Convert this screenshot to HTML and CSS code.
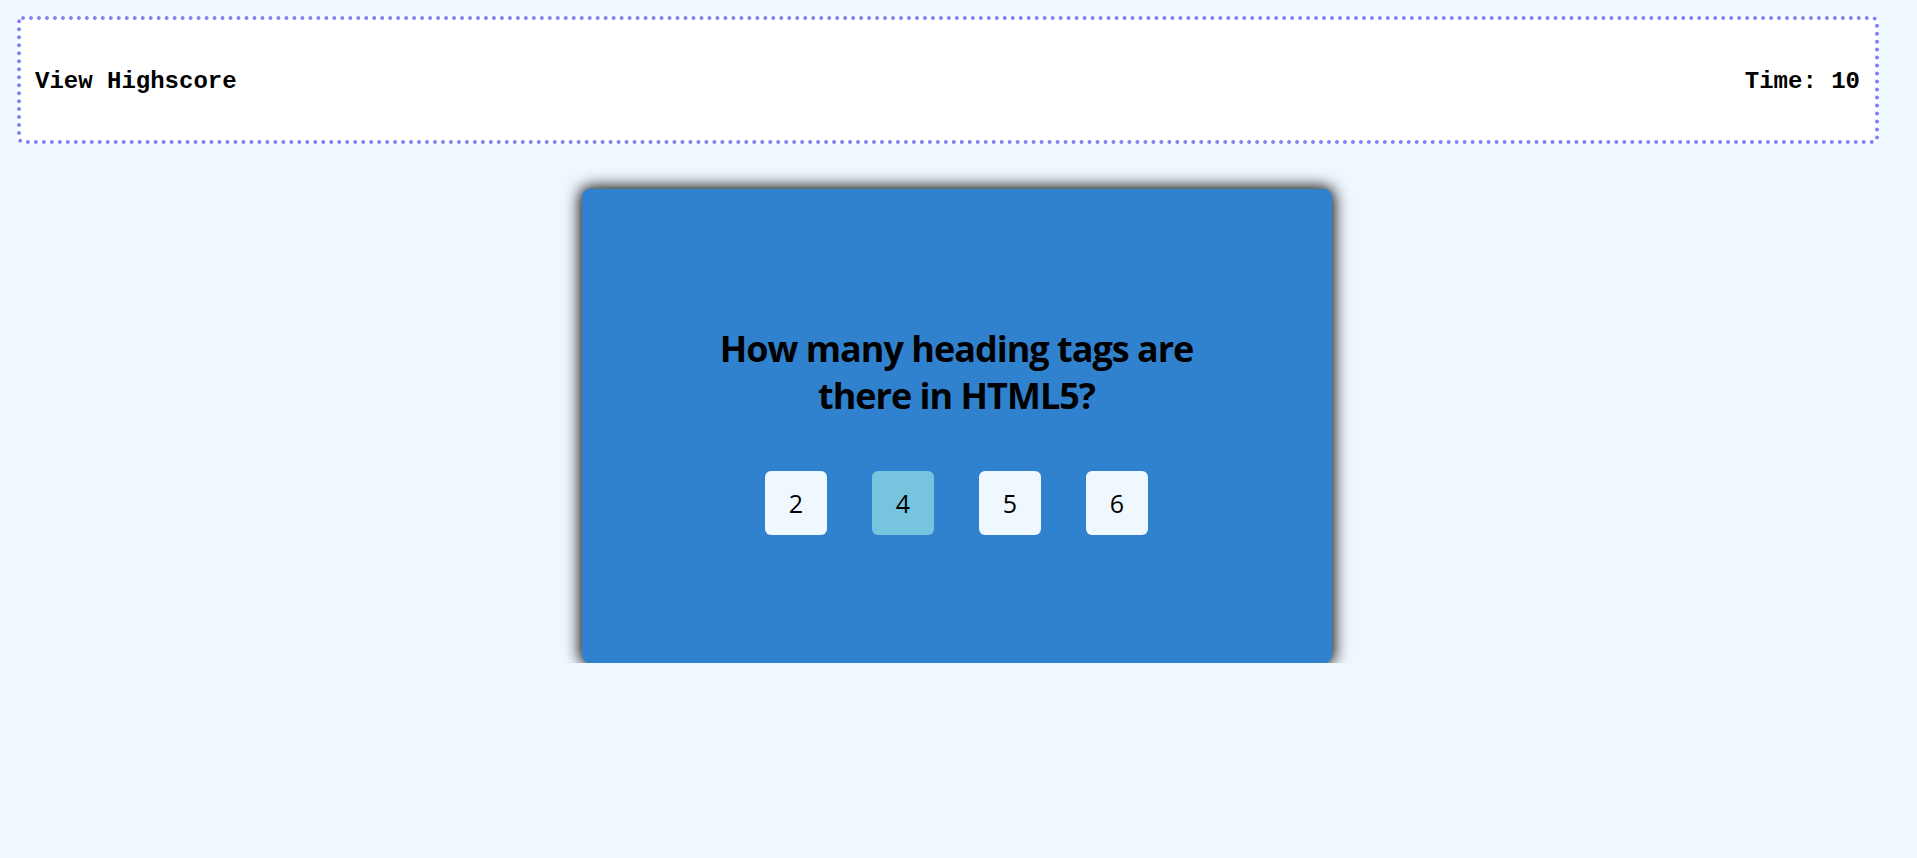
FILE: index.html
```html
<!DOCTYPE html>
<html lang="en">
<head>
<meta charset="utf-8">
<title>Quiz</title>
<link rel="stylesheet" href="styles.css">
</head>
<body>
<header class="topbar">
  <span class="topbar-link">View Highscore</span>
  <span class="topbar-time">Time: 10</span>
</header>
<div class="stage">
  <main class="quiz-card">
    <h1 class="question">How many heading tags are there in HTML5?</h1>
    <div class="answers">
      <button class="answer">2</button>
      <button class="answer answer-active">4</button>
      <button class="answer">5</button>
      <button class="answer">6</button>
    </div>
  </main>
</div>
</body>
</html>
```
FILE: styles.css
```css
html, body {
  margin: 0;
  padding: 0;
}
body {
  background: #f0f8ff;
  font-family: "Open Sans", "Noto Sans", sans-serif;
  color: #000;
}
.topbar {
  margin: 16px 38px 0 17px;
  height: 128px;
  box-sizing: border-box;
  border: 4px dotted #8282f4;
  border-radius: 6px;
  background: #fff;
  display: flex;
  align-items: center;
  justify-content: space-between;
  padding: 2px 15px 0 14px;
  font-family: "Liberation Mono", "Courier New", monospace;
  font-weight: bold;
  font-size: 24px;
}
.stage {
  padding: 45px 4px 0 0;
}
.quiz-card {
  width: 750px;
  height: 474px;
  margin: 0 auto;
  box-sizing: border-box;
  background: #3182ce;
  border-radius: 8px;
  box-shadow: 0 0 16px 2px #000;
  display: flex;
  flex-direction: column;
  align-items: center;
  justify-content: center;
  padding-top: 8px;
}
.question {
  margin: 0 0 52px;
  max-width: 500px;
  text-align: center;
  font-size: 36px;
  line-height: 47px;
  letter-spacing: -1px;
  font-weight: 700;
}
.answers {
  display: flex;
  gap: 45px;
}
.answer {
  width: 62px;
  height: 64px;
  border: 0;
  border-radius: 6px;
  background: #f0f8ff;
  font-family: "Open Sans", "Noto Sans", sans-serif;
  font-size: 25px;
  color: #000;
  padding: 0;
}
.answer-active {
  background: #77c4df;
}
```
